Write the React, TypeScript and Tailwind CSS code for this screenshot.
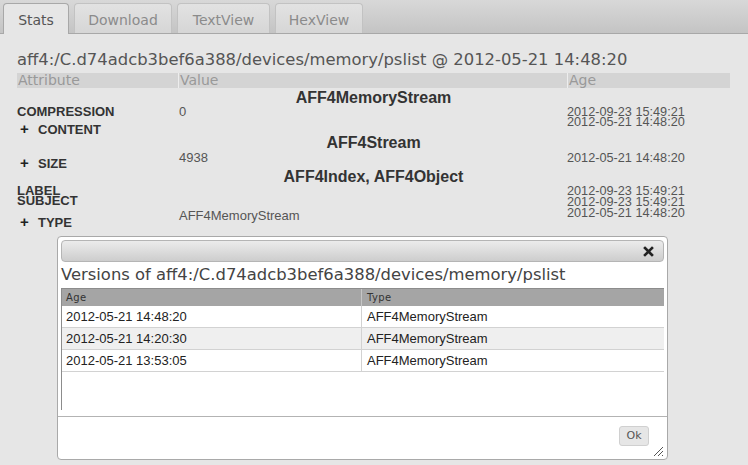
const verdana = "font-['DejaVu_Sans',Verdana,sans-serif]";
const arial = "font-['Liberation_Sans',Arial,sans-serif]";

type AttrRow = {
  label: string;
  plus?: boolean;
  value?: string;
  age: string;
  h: string;
  lp?: string;
  vp?: string;
  ap?: string;
};

const sections: { type: string; rows: AttrRow[] }[] = [
  {
    type: 'AFF4MemoryStream',
    rows: [
      { label: 'COMPRESSION', value: '0', age: '2012-09-23 15:49:21', h: 'h-[10px]' },
      { label: 'CONTENT', plus: true, age: '2012-05-21 14:48:20', h: 'h-[17px]', lp: 'pt-[7px]' },
    ],
  },
  {
    type: 'AFF4Stream',
    rows: [
      { label: 'SIZE', plus: true, value: '4938', age: '2012-05-21 14:48:20', h: 'h-[16px]', lp: 'pt-[6px]', vp: 'pt-px', ap: 'pt-px' },
    ],
  },
  {
    type: 'AFF4Index, AFF4Object',
    rows: [
      { label: 'LABEL', age: '2012-09-23 15:49:21', h: 'h-[10px]' },
      { label: 'SUBJECT', age: '2012-09-23 15:49:21', h: 'h-[10px]', ap: 'pt-px' },
      { label: 'TYPE', plus: true, value: 'AFF4MemoryStream', age: '2012-05-21 14:48:20', h: 'h-[21px]', lp: 'pt-[11px]', vp: 'pt-[5px]', ap: 'pt-[2px]' },
    ],
  },
];

const versions = ['2012-05-21 14:48:20', '2012-05-21 14:20:30', '2012-05-21 13:53:05'];

const tabs = [
  { name: 'Stats', w: 'w-[66px]', active: true },
  { name: 'Download', w: 'w-[98px]' },
  { name: 'TextView', w: 'w-[93px]' },
  { name: 'HexView', w: 'w-[88px]' },
];

function CloseIcon() {
  return (
    <svg width="11" height="11" viewBox="0 0 11 11">
      <path d="M2 2 L9 9 M9 2 L2 9" stroke="#222" strokeWidth="2.6" strokeLinecap="square" />
    </svg>
  );
}

function ResizeGrip() {
  return (
    <svg width="12" height="12" viewBox="0 0 12 12" className="absolute bottom-[2px] right-[3px]">
      <path d="M11 2 L2 11 M11 6 L6 11 M11 10 L10 11" stroke="#555" strokeWidth="1" />
    </svg>
  );
}

function VersionsDialog() {
  return (
    <div className="absolute left-[57px] top-[236px] flex h-[224px] w-[611px] flex-col rounded-[4px] border border-[#a9a9a9] bg-white">
      <div className="flex flex-col px-[3px] pt-[3px]">
        <div className="flex h-[22px] items-center justify-end rounded-[4px] border border-[#b5b5b5] bg-gradient-to-b from-[#ececec] to-[#cdcdcd] pr-[9px]">
          <CloseIcon />
        </div>
        <div className={`${verdana} pt-[3px] text-[16.4px] leading-[20px] text-[#444] whitespace-nowrap`}>
          Versions of aff4:/C.d74adcb3bef6a388/devices/memory/pslist
        </div>
        <div className="mt-[3px] h-[122px] border-l border-t border-[#8c8c8c] bg-white">
          <div className={`${verdana} flex h-[17px] bg-[#a5a5a5] text-[10px] leading-[17px] tracking-[0.4px] text-[#333]`}>
            <div className="w-[300px] border-r border-[#c6c6c6] pl-[4px]">Age</div>
            <div className="pl-[5px]">Type</div>
          </div>
          {versions.map((v, i) => (
            <div
              key={v}
              className={`${arial} flex h-[22px] border-b border-[#d2d2d2] text-[13px] leading-[21px] text-[#222] ${i === 1 ? 'bg-[#efefef]' : 'bg-white'}`}
            >
              <div className="w-[300px] border-r border-[#d2d2d2] pl-[4px]">{v}</div>
              <div className="pl-[5px]">AFF4MemoryStream</div>
            </div>
          ))}
        </div>
      </div>
      <div className="relative mt-[6px] flex flex-1 justify-end border-t border-[#b3b3b3] pr-[18px] pt-[9px]">
        <button className={`${verdana} h-[20px] w-[30px] rounded-[3px] border border-[#d0d0d0] bg-[#e6e6e6] text-[11px] leading-[18px] text-[#555]`}>
          Ok
        </button>
        <ResizeGrip />
      </div>
    </div>
  );
}

export default function App() {
  return (
    <div className="relative h-[465px] w-[748px] overflow-hidden bg-[#e6e6e6]">
      <div className="flex h-[34px] items-start gap-[5px] border-b border-[#a8a8a8] bg-gradient-to-b from-[#d8d8d8] to-[#c4c4c4] pl-[3px] pt-[3px]">
        {tabs.map((t) =>
          t.active ? (
            <div
              key={t.name}
              className={`${verdana} ${t.w} h-[31px] rounded-t-[4px] border border-b-0 border-[#a8a8a8] bg-[#e6e6e6] pt-[6px] text-center text-[14px] leading-[20px] text-[#555]`}
            >
              {t.name}
            </div>
          ) : (
            <div
              key={t.name}
              className={`${verdana} ${t.w} h-[30px] rounded-t-[4px] border border-b-0 border-[#c2c2c2] bg-gradient-to-b from-[#e2e2e2] to-[#d6d6d6] pt-[6px] text-center text-[14px] leading-[20px] text-[#8b8b8b]`}
            >
              {t.name}
            </div>
          )
        )}
      </div>

      <div className="px-[17px] pt-[16px]">
        <div className={`${verdana} h-[20px] whitespace-nowrap text-[16.4px] leading-[20px] text-[#555]`}>
          aff4:/C.d74adcb3bef6a388/devices/memory/pslist @ 2012-05-21 14:48:20
        </div>
        <div className="mt-[3px] w-[713px]">
          <div className={`${verdana} grid h-[15px] grid-cols-[161px_389px_163px] bg-[#d4d4d4] text-[14px] leading-[15px] text-[#999]`}>
            <div className="pl-px">Attribute</div>
            <div className="border-l border-[#ededed] pl-px">Value</div>
            <div className="border-l border-[#ededed] pl-px">Age</div>
          </div>
          <div className="h-px" />
          {sections.map((s) => (
            <div key={s.type}>
              <div className={`${arial} h-[18px] text-center text-[16px] font-bold leading-[18px] text-[#333]`}>{s.type}</div>
              {s.rows.map((r) => (
                <div key={r.label} className={`${arial} grid grid-cols-[161px_389px_163px] ${r.h} text-[13px] leading-[10px]`}>
                  <div className={`${r.lp ?? ''} whitespace-nowrap font-bold text-[#333]`}>
                    {r.plus ? (
                      <span className="ml-[3px] mr-[9px] inline-block w-[9px] text-[15px] text-[#222]">+</span>
                    ) : null}
                    {r.label}
                  </div>
                  <div className={`${r.vp ?? ''} pl-px text-[#555]`}>{r.value ?? ''}</div>
                  <div className={`${r.ap ?? ''} whitespace-nowrap text-[12.7px] text-[#555]`}>{r.age}</div>
                </div>
              ))}
            </div>
          ))}
        </div>
      </div>

      <VersionsDialog />
    </div>
  );
}
